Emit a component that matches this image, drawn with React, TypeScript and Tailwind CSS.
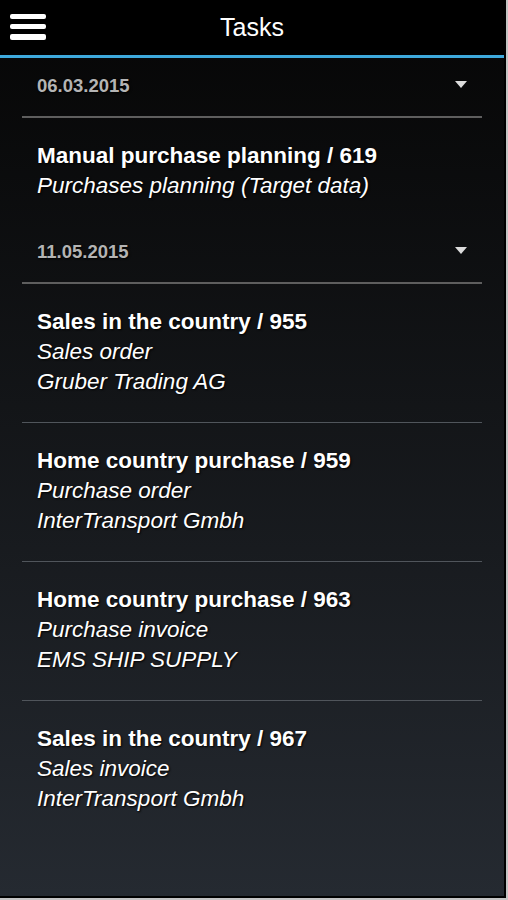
import React from 'react';

interface Task {
  title: string;
  lines: string[];
}

interface Group {
  date: string;
  tasks: Task[];
}

const groups: Group[] = [
  {
    date: '06.03.2015',
    tasks: [{ title: 'Manual purchase planning / 619', lines: ['Purchases planning (Target data)'] }],
  },
  {
    date: '11.05.2015',
    tasks: [
      { title: 'Sales in the country / 955', lines: ['Sales order', 'Gruber Trading AG'] },
      { title: 'Home country purchase / 959', lines: ['Purchase order', 'InterTransport Gmbh'] },
      { title: 'Home country purchase / 963', lines: ['Purchase invoice', 'EMS SHIP SUPPLY'] },
      { title: 'Sales in the country / 967', lines: ['Sales invoice', 'InterTransport Gmbh'] },
    ],
  },
];

const App: React.FC = () => {
  return (
    <div className="w-[508px] h-[900px] bg-[#c4c4c4] font-['Liberation_Sans',Arial,sans-serif]">
      <div className="w-[506px] h-[898px] border-r-2 border-b-2 border-black flex flex-col bg-gradient-to-b from-[#060606] to-[#252a31] overflow-hidden">
        {/* Header */}
        <div className="h-[58px] shrink-0 bg-black border-b-[3px] border-[#3ea9dc] relative flex items-center justify-center">
          <div className="absolute left-[10px] top-[14px] flex flex-col gap-[5px]">
            <div className="w-[36px] h-[5px] bg-white rounded-[2px]" />
            <div className="w-[36px] h-[5px] bg-white rounded-[2px]" />
            <div className="w-[36px] h-[6px] bg-white rounded-[2px]" />
          </div>
          <h1 className="text-[25px] text-white leading-none -mt-[1px]">Tasks</h1>
        </div>

        {/* List */}
        <div className="px-[22px] [text-shadow:1px_1px_2px_#000]">
          {groups.map((g) => (
            <div key={g.date}>
              <div className="h-[60px] flex items-center justify-between border-b-2 border-[#5e5e5e] pl-[15px] pr-[15px]">
                <span className="text-[18.5px] font-bold text-[#b4b4b4] mb-[3px]">{g.date}</span>
                <svg width="12" height="7" viewBox="0 0 12 7" className="mb-[5px]">
                  <polygon points="0,0 12,0 6,7" fill="#dcdcdc" />
                </svg>
              </div>
              {g.tasks.map((t, i) => {
                const last = i === g.tasks.length - 1;
                return (
                  <div
                    key={t.title}
                    className={`pl-[15px] pt-[23px] leading-[30px] text-[22.5px] text-white ${
                      last ? 'pb-[23px]' : 'pb-[25px] border-b border-[#50555b]'
                    }`}
                  >
                    <div className="font-bold">{t.title}</div>
                    {t.lines.map((l) => (
                      <div key={l} className="italic">
                        {l}
                      </div>
                    ))}
                  </div>
                );
              })}
            </div>
          ))}
        </div>
      </div>
    </div>
  );
};

export default App;
